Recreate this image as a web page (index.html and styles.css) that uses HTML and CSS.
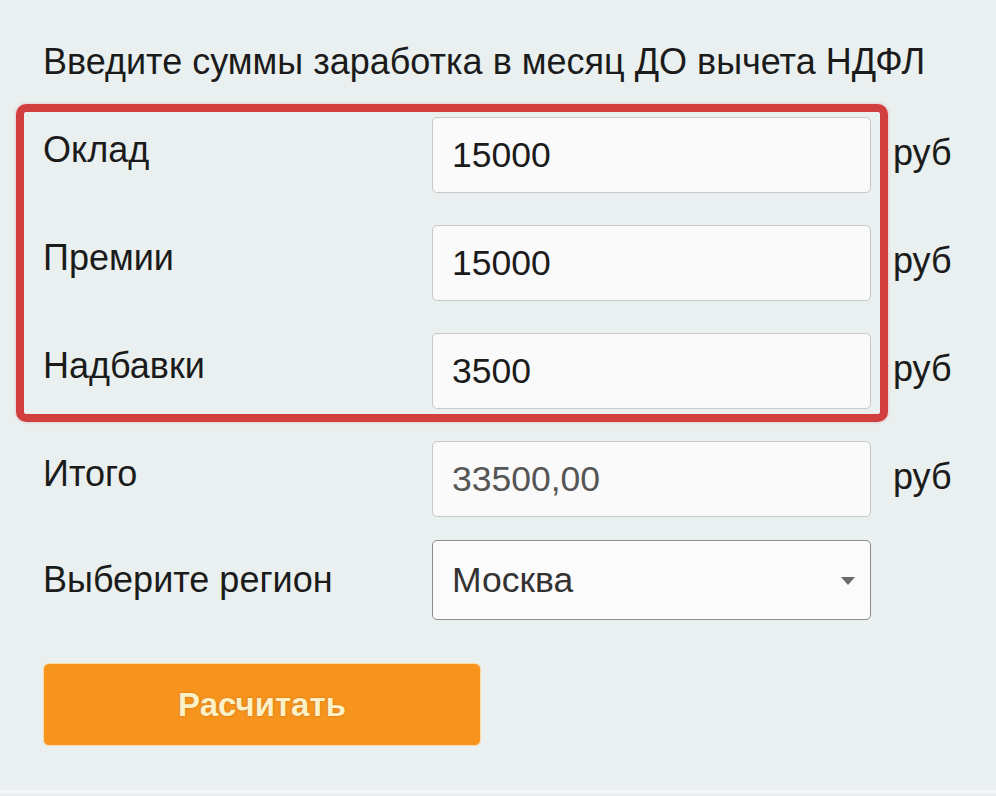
FILE: index.html
```html
<!DOCTYPE html>
<html lang="ru">
<head>
<meta charset="utf-8">
<title>Калькулятор НДФЛ</title>
<link rel="stylesheet" href="styles.css">
</head>
<body>
<div class="calc">
  <h1 class="title">Введите суммы заработка в месяц ДО вычета НДФЛ</h1>
  <div class="form">
    <div class="row">
      <div class="label">Оклад</div>
      <div class="field">15000</div>
      <div class="unit">руб</div>
    </div>
    <div class="row">
      <div class="label">Премии</div>
      <div class="field">15000</div>
      <div class="unit">руб</div>
    </div>
    <div class="row">
      <div class="label">Надбавки</div>
      <div class="field">3500</div>
      <div class="unit">руб</div>
    </div>
    <div class="row">
      <div class="label">Итого</div>
      <div class="field readonly">33500,00</div>
      <div class="unit">руб</div>
    </div>
    <div class="row row-select">
      <div class="label">Выберите регион</div>
      <div class="select">
        <span>Москва</span>
        <svg class="caret" width="14" height="8" viewBox="0 0 14 8"><path d="M0 0 H14 L7 8 Z" fill="#6b6b6b"/></svg>
      </div>
    </div>
    <div class="highlight"></div>
  </div>
  <button class="btn">Расчитать</button>
</div>
</body>
</html>
```

FILE: styles.css
```css
html, body {
  margin: 0;
  padding: 0;
}
body {
  background: #e9f0ef;
  font-family: "Liberation Sans", Arial, sans-serif;
  color: #1b1b1b;
  width: 996px;
  height: 796px;
  overflow: hidden;
}
.calc {
  padding: 42px 0 0 43px;
  height: 793px;
  box-sizing: border-box;
  border-bottom: 3px solid #f3f7f7;
}
.title {
  margin: 0;
  font-size: 36px;
  line-height: 40px;
  font-weight: normal;
  color: #1b1b1b;
}
.form {
  position: relative;
  margin-top: 35px;
  display: flex;
  flex-direction: column;
  gap: 32px;
}
.row {
  display: grid;
  grid-template-columns: 389px 439px auto;
  align-items: start;
}
.label {
  font-size: 36px;
  line-height: 40px;
  padding-top: 13px;
}
.field {
  height: 76px;
  box-sizing: border-box;
  background: #fafafa;
  border: 1px solid #c6c9c9;
  border-radius: 5px;
  padding: 0 19px;
  display: flex;
  align-items: center;
  font-size: 35.5px;
  color: #1b1b1b;
}
.field.readonly {
  color: #555555;
}
.unit {
  font-size: 36px;
  line-height: 40px;
  padding-top: 16px;
  margin-left: 22px;
}
.row-select {
  margin-top: -9px;
}
.row-select .label {
  padding-top: 20px;
}
.select {
  height: 80px;
  box-sizing: border-box;
  background: #fbfbfb;
  border: 1px solid #8c8c8c;
  border-radius: 5px;
  padding: 0 15px 0 19px;
  display: flex;
  align-items: center;
  justify-content: space-between;
  font-size: 35.5px;
  color: #333333;
}
.caret {
  margin-top: 2px;
}
.highlight {
  position: absolute;
  left: -27px;
  top: -13px;
  width: 872px;
  height: 318px;
  box-sizing: border-box;
  border: 8px solid #d23f3f;
  border-radius: 10px;
  box-shadow: 0 0 3px rgba(210, 63, 63, 0.35);
  pointer-events: none;
}
.btn {
  margin-top: 43px;
  width: 438px;
  height: 83px;
  background: #f7941e;
  border: 1px solid #fcd9a6;
  border-radius: 6px;
  font-family: "Liberation Sans", Arial, sans-serif;
  font-size: 33px;
  font-weight: bold;
  color: #fcf0c6;
  text-shadow: 0 0 2px rgba(140, 70, 0, 0.55);
  display: block;
  padding: 0;
}
```
